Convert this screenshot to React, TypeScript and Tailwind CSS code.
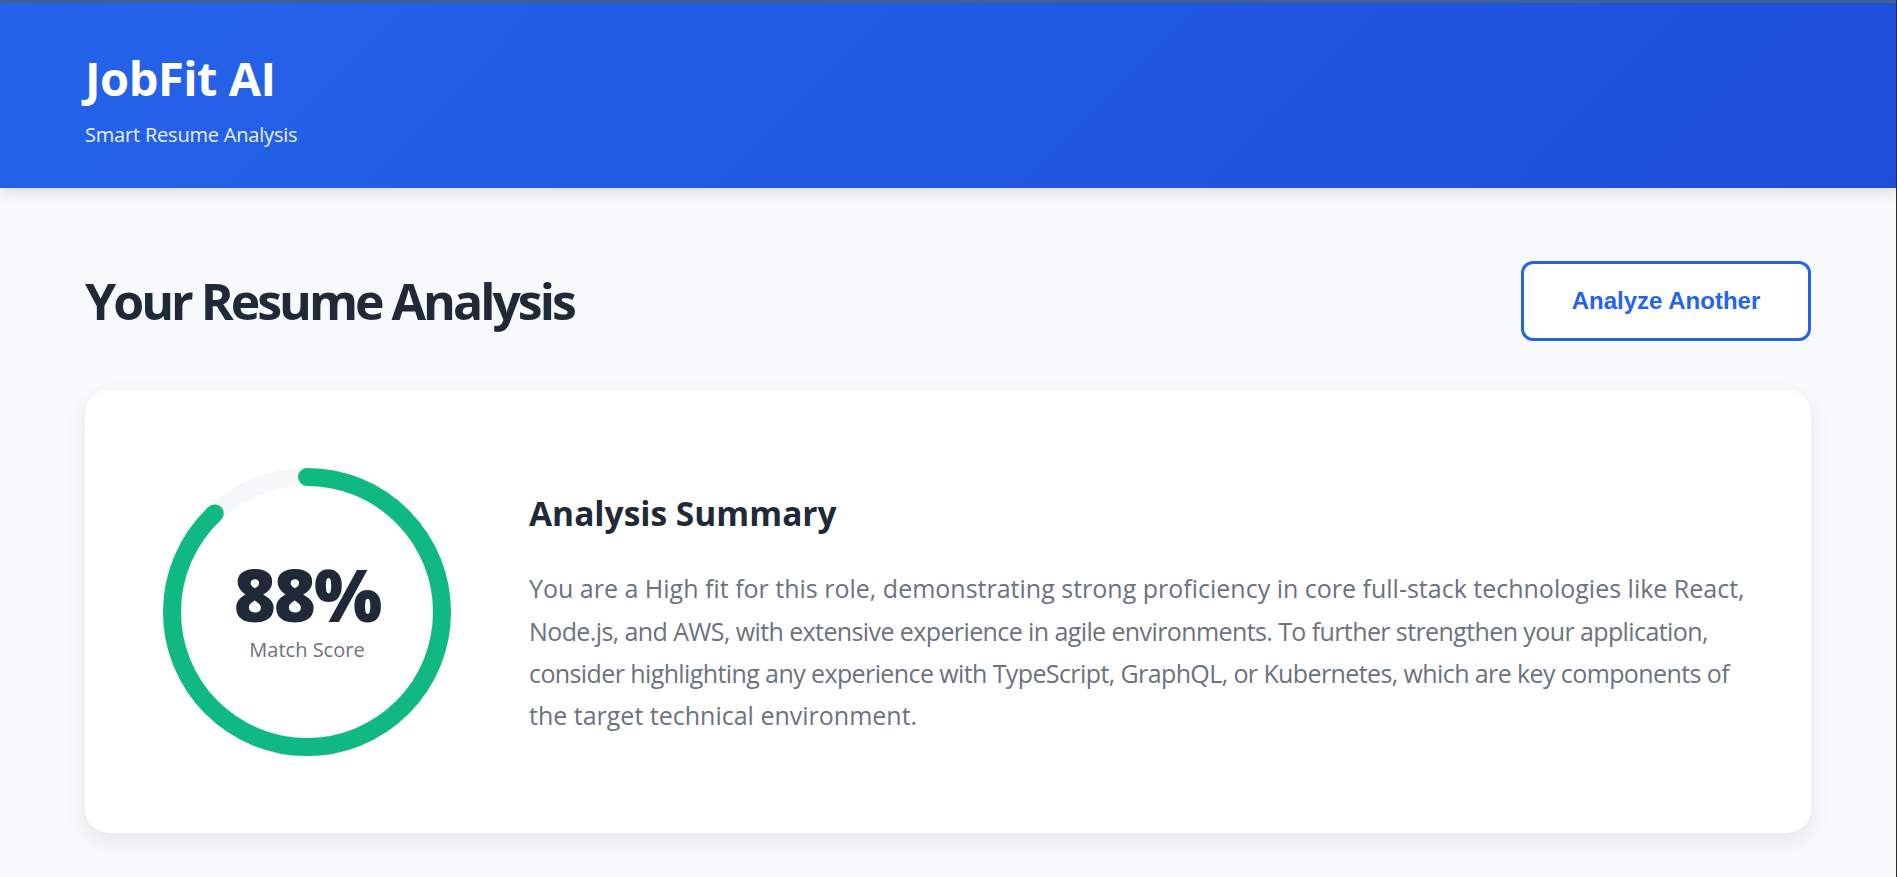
import React from 'react';

const SCORE = 88;
const RADIUS = 135;
const CIRC = 2 * Math.PI * RADIUS;

function ScoreRing({ score }: { score: number }) {
  const dash = (score / 100) * CIRC;
  return (
    <div className="relative w-[288px] h-[288px] shrink-0">
      <svg width="288" height="288" viewBox="0 0 288 288" className="-rotate-90">
        <circle cx="144" cy="144" r={RADIUS} fill="none" stroke="#f5f6f8" strokeWidth="18" />
        <circle
          cx="144"
          cy="144"
          r={RADIUS}
          fill="none"
          stroke="#10b981"
          strokeWidth="18"
          strokeLinecap="round"
          strokeDasharray={`${dash} ${CIRC}`}
        />
      </svg>
      <div className="absolute inset-0 flex flex-col items-center justify-center">
        <div className="text-[72px] leading-[72px] font-extrabold text-[#1f2937] tracking-[-2px]">
          {score}%
        </div>
        <div className="mt-[5px] text-[20px] leading-[30px] text-[#6b7280]">Match Score</div>
      </div>
    </div>
  );
}

export default function App() {
  return (
    <div
      className="w-full h-[877px] overflow-hidden bg-[#f8f9fb] border-r border-[#2a2a2a] flex flex-col"
      style={{ fontFamily: '"Open Sans", "Noto Sans", sans-serif' }}
    >
      <div className="h-[3px] shrink-0 bg-[#3f6396]" />
      <header className="relative z-10 h-[185px] shrink-0 px-[85px] flex flex-col bg-[linear-gradient(135deg,#2563eb,#1d4ed8)] shadow-[0_4px_14px_rgba(0,0,0,0.12)]">
        <h1 className="mt-[46px] text-[47px] leading-[58px] font-bold text-white tracking-[-0.5px]">
          JobFit AI
        </h1>
        <p className="mt-[14px] text-[20px] leading-[28px] text-white/90 tracking-[-0.2px]">
          Smart Resume Analysis
        </p>
      </header>

      <main className="px-[85px] pt-[73px]">
        <div className="flex items-center justify-between mb-[49px]">
          <h2 className="text-[50px] leading-[60px] font-bold text-[#1f2937] tracking-[-3px]">
            Your Resume Analysis
          </h2>
          <button
            className="w-[290px] h-[80px] bg-white border-[3px] border-[#2563eb] rounded-[12px] text-[24px] font-bold text-[#2563eb]"
            style={{ fontFamily: '"Liberation Sans", Arial, sans-serif' }}
          >
            Analyze Another
          </button>
        </div>

        <div className="h-[443px] bg-white rounded-[24px] shadow-[0_8px_24px_rgba(0,0,0,0.08)] pl-[78px] pr-[66px] py-[78px] flex items-center gap-[78px]">
          <ScoreRing score={SCORE} />
          <div className="flex-1 pt-[7px]">
            <h3 className="text-[33.5px] leading-[40px] font-bold text-[#1f2937]">Analysis Summary</h3>
            <p className="mt-[34px] text-[25px] leading-[42.3px] text-[#6b7280]">
              <span className="block whitespace-nowrap">
                You are a High fit for this role, demonstrating strong proficiency in core full-stack technologies like React,
              </span>
              <span className="block whitespace-nowrap tracking-[-0.6px]">
                Node.js, and AWS, with extensive experience in agile environments. To further strengthen your application,
              </span>
              <span className="block whitespace-nowrap tracking-[-0.6px]">
                consider highlighting any experience with TypeScript, GraphQL, or Kubernetes, which are key components of
              </span>
              <span className="block whitespace-nowrap">the target technical environment.</span>
            </p>
          </div>
        </div>
      </main>
    </div>
  );
}
